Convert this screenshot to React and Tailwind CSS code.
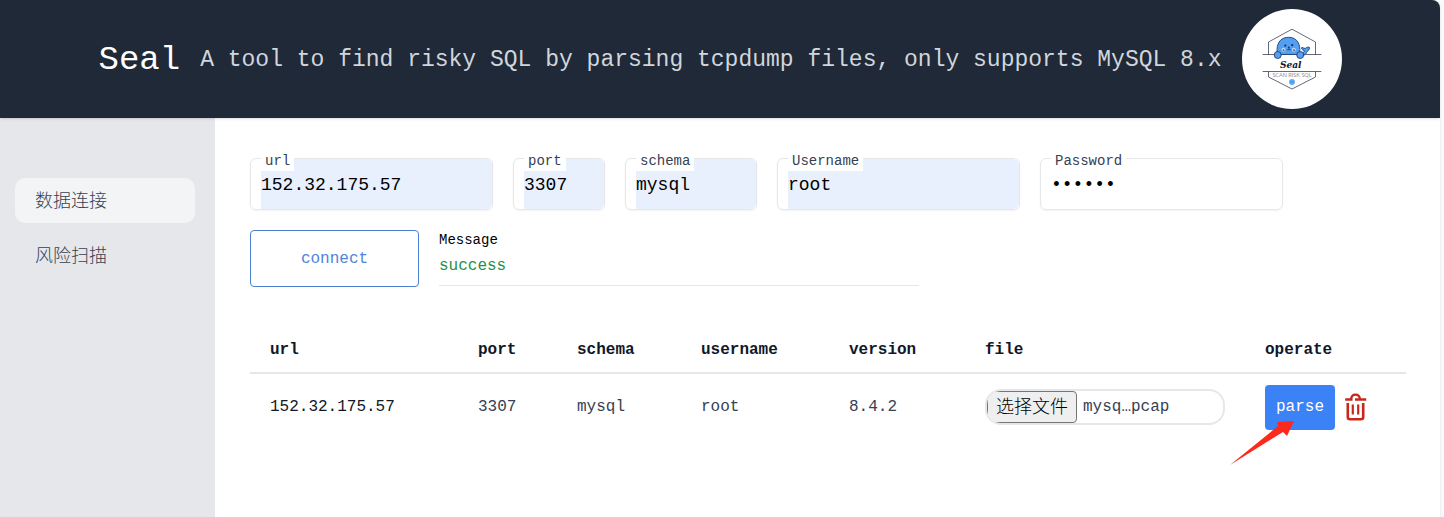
import { useId } from "react";

function Logo() {
  return (
    <svg viewBox="0 0 100 100" className="size-[100px] shrink-0" role="img" aria-label="Seal logo">
      <circle cx="50" cy="50" r="50" fill="#ffffff" />
      <g fill="none" stroke="#3f4356" strokeWidth="0.8">
        <path d="M26.500 45.500V33L50 20.200 73.500 33V45.500" />
        <path d="M20.700 45.500H79.300M20.700 62.500H79.300" />
        <path d="M26.500 62.500V68L50 80 73.500 68V62.500" />
      </g>
      <g stroke="#1f3f70" strokeWidth="0.900" fill="#559ff2">
        <path d="M56 45.800C61 44.500 62.500 43 62.300 41.500C59.500 41 59 38.800 60 38.300C61.500 39.300 62.800 39.500 63.800 39.200C65 38 67 37.700 67.500 38.500C67.300 41 66 42.300 64.800 42.800C64 45.500 62 47 57 47Z" />
        <path d="M35 45.500V40.500C35.300 32.500 40 28.300 46.500 28.300C53.500 28.300 57.800 33 57.800 40.500V45.500Z" />
        <circle cx="35.700" cy="46" r="3.500" />
        <circle cx="58.200" cy="46" r="3.500" />
      </g>
      <g fill="#b5d9fb">
        <circle cx="41.500" cy="40.800" r="2" />
        <circle cx="51.800" cy="40.800" r="2" />
      </g>
      <g fill="#1c3158">
        <circle cx="43.300" cy="36.600" r="1.100" />
        <circle cx="50.200" cy="36.200" r="1.100" />
        <circle cx="46.800" cy="38.400" r="0.900" />
        <path d="M40.800 40.500h1.500v1.200h-1.500zM51.200 40.500h1.500v1.200h-1.500z" />
      </g>
      <path d="M44.800 40.500Q46.500 42 46.900 39.500Q47.500 42 49 40.500" fill="none" stroke="#1c3158" strokeWidth="0.700" />
      <text x="48.800" y="59" textAnchor="middle" fontFamily="'DejaVu Serif', serif" fontWeight="700" fontStyle="italic" fontSize="9" fill="#14162b">
        Seal
      </text>
      <text x="50" y="68" textAnchor="middle" fontFamily="Lato, sans-serif" fontSize="5.500" fill="#8d8f9c">
        SCAN RISK SQL
      </text>
      <circle cx="50" cy="73" r="3" fill="#62b0f5" />
      <path d="M49 71.500V74.500M51 71.500V74.500" stroke="#2f7fd0" strokeWidth="0.600" />
    </svg>
  );
}

function TrashIcon() {
  return (
    <svg viewBox="0 0 22 28" className="h-7 w-[22px]" fill="none" stroke="#c8281a" strokeWidth="2.600" aria-hidden="true">
      <path d="M0.200 6.500H7.500M10 6.500H21.200" />
      <path d="M6 6.500C6.300 3 8 1.600 10.500 1.600S14.700 3 15 6.500" strokeWidth="2.200" />
      <path d="M2.800 10V24Q2.800 26.300 5 26.300H16Q18.200 26.300 18.200 24V10" />
      <path d="M7.800 11.500V21.500M13.200 11.500V21.500" strokeWidth="2.200" />
    </svg>
  );
}

function PointerArrow() {
  return (
    <svg
      viewBox="0 0 66 46"
      className="pointer-events-none absolute -left-9 top-[35px] h-[46px] w-[66px]"
      fill="#fc2a1c"
      aria-hidden="true"
    >
      <path d="M1 45L49 6 48 2 65 1 58 16 54 12Z" />
    </svg>
  );
}

function Field({ label, value, type = "text", filled = true, width }) {
  const id = useId();
  return (
    <div className={`relative flex h-[52px] rounded-md border border-gray-200 pl-2.5 shadow-xs ${width}`}>
      <input
        id={id}
        type={type}
        defaultValue={value}
        className={`h-full w-full min-w-0 rounded-r-md pt-0.5 text-lg leading-6 text-black outline-none ${filled ? "bg-[#e8f0fe]" : "bg-white"}`}
      />
      <label htmlFor={id} className="absolute -top-2 left-2.5 bg-white px-1 text-sm text-gray-700">
        {label}
      </label>
    </div>
  );
}

const columns = [
  { name: "url", width: "w-[208px]" },
  { name: "port", width: "w-[99px]" },
  { name: "schema", width: "w-[124px]" },
  { name: "username", width: "w-[148px]" },
  { name: "version", width: "w-[136px]" },
  { name: "file", width: "w-[280px]" },
  { name: "operate", width: "w-[161px]" },
];

export default function App() {
  return (
    <div className="min-h-screen bg-gray-50 pr-1 font-['Liberation_Mono','Noto_Sans_CJK_SC',monospace]">
      <div className="flex min-h-screen flex-col overflow-hidden rounded-tr-lg bg-white shadow">
        <header className="z-10 flex items-center justify-center gap-5 bg-[#1f2937] py-[9px] shadow">
          <h1 className="pt-0.5 text-[34px] leading-10 text-white">Seal</h1>
          <p className="whitespace-nowrap pt-0.5 text-[23px] leading-8 text-gray-300">
            A tool to find risky SQL by parsing tcpdump files, only supports MySQL 8.x
          </p>
          <Logo />
        </header>

        <div className="flex flex-1">
          <nav className="flex w-[215px] shrink-0 flex-col gap-2.5 bg-gray-200 pl-[15px] pr-5 pt-[60px] font-['Noto_Sans_CJK_SC',sans-serif] text-lg font-light text-gray-700">
            <a href="#connection" className="flex h-[45px] items-center rounded-[10px] bg-gray-100 px-5 pb-1">
              数据连接
            </a>
            <a href="#scan" className="flex h-[45px] items-center rounded-[10px] px-5 pb-1">
              风险扫描
            </a>
          </nav>

          <main className="min-w-0 flex-1 pb-10 pl-[35px] pr-[34px] pt-10">
            <form className="flex flex-wrap gap-5">
              <Field label="url" value="152.32.175.57" width="w-[243px]" />
              <Field label="port" value="3307" width="w-[92px]" />
              <Field label="schema" value="mysql" width="w-[132px]" />
              <Field label="Username" value="root" width="w-[243px]" />
              <Field label="Password" value="secret" type="password" filled={false} width="w-[243px]" />
              <div className="flex w-full gap-5">
                <button type="button" className="h-[57px] w-[169px] rounded border border-[#4a80d0] text-base text-[#4f83dc]">
                  connect
                </button>
                <div className="h-14 w-[480px] border-b border-gray-200">
                  <div className="text-sm text-black">Message</div>
                  <div className="mt-1 text-base text-[#22914c]">success</div>
                </div>
              </div>
            </form>

            <table className="mt-10 w-full table-fixed text-left text-base">
              <thead>
                <tr className="h-[46px] border-b-2 border-gray-200 text-gray-900">
                  {columns.map((c) => (
                    <th key={c.name} className={`pl-5 font-bold ${c.width}`}>
                      {c.name}
                    </th>
                  ))}
                </tr>
              </thead>
              <tbody>
                <tr className="h-[67px] text-gray-700">
                  <td className="pl-5 text-gray-900">152.32.175.57</td>
                  <td className="pl-5">3307</td>
                  <td className="pl-5">mysql</td>
                  <td className="pl-5">root</td>
                  <td className="pl-5">8.4.2</td>
                  <td className="px-5">
                    <input id="capture" type="file" className="sr-only" />
                    <label htmlFor="capture" className="flex h-9 items-center overflow-hidden rounded-2xl border-2 border-gray-200">
                      <span className="flex h-8 w-[90px] shrink-0 items-center justify-center rounded-sm border border-[#767676] bg-[#efefef] pb-1 font-['Noto_Sans_CJK_SC',sans-serif] text-lg font-light text-black">
                        选择文件
                      </span>
                      <span className="ml-1.5">mysq…pcap</span>
                    </label>
                  </td>
                  <td className="pl-5">
                    <div className="relative flex items-center gap-2.5">
                      <button type="button" className="h-[45px] w-[70px] rounded bg-[#3b82f6] text-white">
                        parse
                      </button>
                      <button type="button" aria-label="Delete">
                        <TrashIcon />
                      </button>
                      <PointerArrow />
                    </div>
                  </td>
                </tr>
              </tbody>
            </table>
          </main>
        </div>
      </div>
    </div>
  );
}
